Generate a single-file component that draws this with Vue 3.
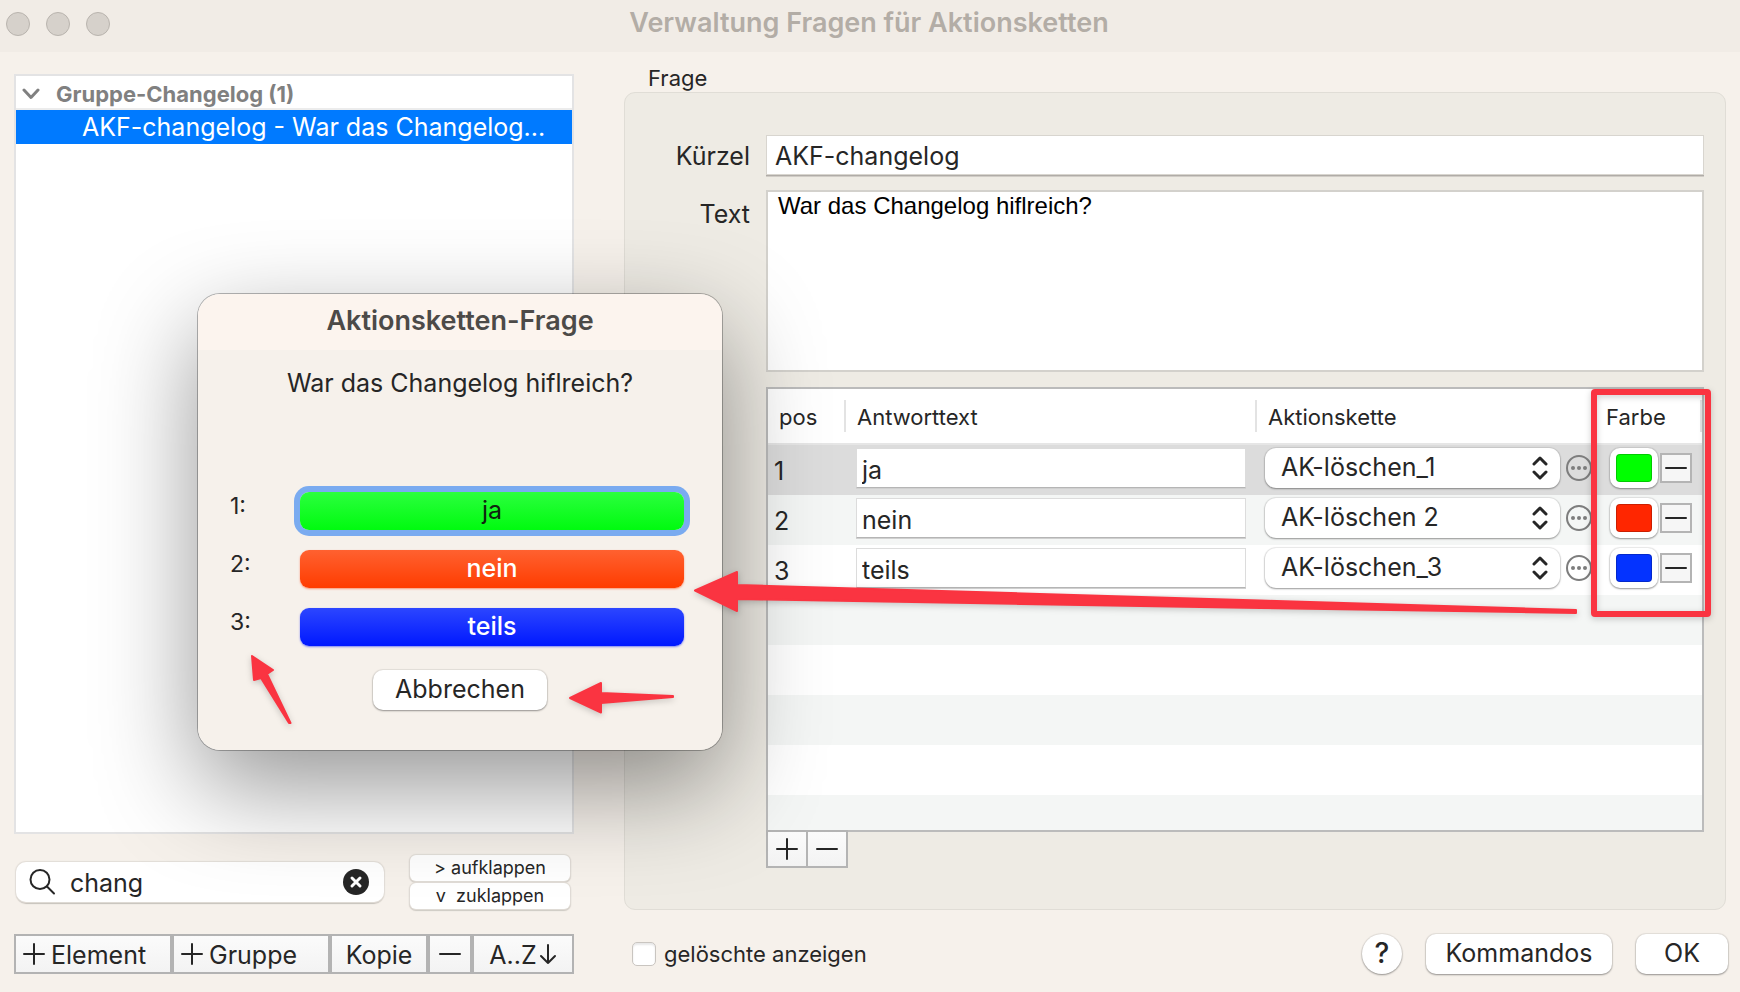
<script setup>
import { ref } from 'vue'

const search = ref('chang')
const code = ref('AKF-changelog')
const text = ref('War das Changelog hiflreich?')
const showDeleted = ref(false)

const chains = ['AK-löschen_1', 'AK-löschen 2', 'AK-löschen_3']
const answers = ref([
  { pos: 1, text: 'ja', chain: 'AK-löschen_1', color: '#00ff00', tone: 'green' },
  { pos: 2, text: 'nein', chain: 'AK-löschen 2', color: '#ff2600', tone: 'red' },
  { pos: 3, text: 'teils', chain: 'AK-löschen_3', color: '#0433ff', tone: 'blue' },
])
</script>

<template>
  <div class="window">
    <header class="titlebar">
      <div class="lights">
        <button class="light" type="button" aria-label="Schließen"></button>
        <button class="light" type="button" aria-label="Minimieren"></button>
        <button class="light" type="button" aria-label="Zoomen"></button>
      </div>
      <h1 class="window-title">Verwaltung Fragen für Aktionsketten</h1>
    </header>

    <main class="content">
      <aside class="sidebar">
        <ul class="tree">
          <li class="tree-group">
            <svg class="chevron" width="18" height="12" viewBox="0 0 18 12" aria-hidden="true">
              <path d="M2 2 L9 9.500 L16 2" />
            </svg>
            Gruppe-Changelog (1)
          </li>
          <li class="tree-item">AKF-changelog - War das Changelog...</li>
        </ul>

        <div class="search-row">
          <div class="search">
            <svg width="28" height="28" viewBox="0 0 28 28" aria-hidden="true">
              <circle cx="12" cy="11.500" r="9.500" />
              <path d="M19 18.500 L26 25.500" />
            </svg>
            <input v-model="search" type="text" aria-label="Suchen" />
            <button class="clear" type="button" aria-label="Suche löschen">
              <svg width="26" height="26" viewBox="0 0 26 26" aria-hidden="true">
                <circle cx="13" cy="13" r="13" />
                <path d="M9 9 L17 17 M17 9 L9 17" />
              </svg>
            </button>
          </div>
          <div class="fold">
            <button type="button">&gt; aufklappen</button>
            <button type="button">v&nbsp; zuklappen</button>
          </div>
        </div>

        <div class="toolbar">
          <button class="tool wide" type="button">
            <svg width="22" height="22" viewBox="0 0 22 22" aria-hidden="true"><path d="M1 11 H21 M11 1 V21" /></svg>
            Element
          </button>
          <button class="tool wide" type="button">
            <svg width="22" height="22" viewBox="0 0 22 22" aria-hidden="true"><path d="M1 11 H21 M11 1 V21" /></svg>
            Gruppe
          </button>
          <button class="tool" type="button">Kopie</button>
          <button class="tool" type="button" aria-label="Entfernen">
            <svg width="22" height="22" viewBox="0 0 22 22" aria-hidden="true"><path d="M1 11 H21" /></svg>
          </button>
          <button class="tool sort" type="button">
            A..Z
            <svg width="18" height="22" viewBox="0 0 18 22" aria-hidden="true"><path d="M9 2 V20 M2 13 L9 20 L16 13" /></svg>
          </button>
        </div>
      </aside>

      <section class="detail" aria-labelledby="frage-title">
        <h2 id="frage-title" class="box-title">Frage</h2>
        <div class="box">
          <label class="field-label" for="code">Kürzel</label>
          <input id="code" v-model="code" class="field" type="text" />
          <label class="field-label top" for="question">Text</label>
          <textarea id="question" v-model="text" class="area"></textarea>

          <div class="answers">
            <div class="grid-frame">
              <table>
                <colgroup>
                  <col class="c-pos" />
                  <col />
                  <col class="c-chain" />
                  <col class="c-color" />
                </colgroup>
                <thead>
                  <tr>
                    <th scope="col">pos</th>
                    <th scope="col">Antworttext</th>
                    <th scope="col">Aktionskette</th>
                    <th scope="col">Farbe</th>
                  </tr>
                </thead>
                <tbody>
                  <tr v-for="(a, i) in answers" :key="a.pos" :class="{ selected: i === 0 }">
                    <td class="pos">{{ a.pos }}</td>
                    <td class="answer">
                      <input v-model="a.text" type="text" :aria-label="'Antworttext ' + a.pos" />
                    </td>
                    <td>
                      <div class="cell">
                        <div class="select">
                          <select v-model="a.chain" :aria-label="'Aktionskette ' + a.pos">
                            <option v-for="c in chains" :key="c">{{ c }}</option>
                          </select>
                          <svg width="16" height="24" viewBox="0 0 16 24" aria-hidden="true">
                            <path d="M2 8 L8 2 L14 8 M2 16 L8 22 L14 16" />
                          </svg>
                        </div>
                        <button class="more" type="button" aria-label="Mehr">
                          <svg width="26" height="26" viewBox="0 0 26 26" aria-hidden="true">
                            <circle class="ring" cx="13" cy="13" r="12" />
                            <circle cx="7" cy="13" r="2" />
                            <circle cx="13" cy="13" r="2" />
                            <circle cx="19" cy="13" r="2" />
                          </svg>
                        </button>
                      </div>
                    </td>
                    <td>
                      <div class="cell color-cell">
                        <input v-model="a.color" class="swatch" type="color" :aria-label="'Farbe ' + a.pos" />
                        <button class="remove" type="button" aria-label="Farbe entfernen">
                          <svg width="22" height="22" viewBox="0 0 22 22" aria-hidden="true"><path d="M1 11 H21" /></svg>
                        </button>
                      </div>
                    </td>
                  </tr>
                </tbody>
              </table>
            </div>
            <div class="row-tools">
              <button type="button" aria-label="Antwort hinzufügen">
                <svg width="22" height="22" viewBox="0 0 22 22" aria-hidden="true"><path d="M1 11 H21 M11 1 V21" /></svg>
              </button>
              <button type="button" aria-label="Antwort entfernen">
                <svg width="22" height="22" viewBox="0 0 22 22" aria-hidden="true"><path d="M1 11 H21" /></svg>
              </button>
            </div>
          </div>
        </div>

        <footer class="footer">
          <label class="check">
            <input v-model="showDeleted" type="checkbox" />
            gelöschte anzeigen
          </label>
          <button class="push help" type="button">?</button>
          <button class="push commands" type="button">Kommandos</button>
          <button class="push ok" type="button">OK</button>
        </footer>
      </section>
    </main>

    <div class="dialog" role="dialog" aria-labelledby="dialog-title">
      <h2 id="dialog-title" class="dialog-title">Aktionsketten-Frage</h2>
      <p class="dialog-text">{{ text }}</p>
      <div class="choices">
        <div v-for="(a, i) in answers" :key="a.pos" class="choice">
          <span class="choice-number">{{ a.pos }}:</span>
          <button type="button" :class="['choice-button', a.tone, { focused: i === 0 }]">{{ a.text }}</button>
        </div>
      </div>
      <button class="push cancel" type="button">Abbrechen</button>
    </div>

    <svg class="marks" aria-hidden="true">
      <rect x="1594" y="392" width="114" height="222" rx="1" />
      <path class="arrow" d="M695 590.500 L737 572 L737 585 L1260 600.500 L1576 610 L1576 613 L1260 608 L737 599 L737 611 Z" />
      <path class="arrow" d="M252 656 L273 670 L267 674 L290.500 723 L289 723 L261 678 L254 680 Z" />
      <path class="arrow" d="M570 698 L601 683 L601 693 L673 696 L673 697 L601 703 L601 712.500 Z" />
    </svg>
  </div>
</template>

<style>
body {
  margin: 0;
  background: #f6f1eb;
}
</style>

<style scoped>
* {
  box-sizing: border-box;
}

.window {
  position: relative;
  display: flex;
  flex-direction: column;
  min-height: 100vh;
  overflow: hidden;
  background: #f6f1eb;
  color: #262626;
  font-family: Inter, "Liberation Sans", sans-serif;
  font-size: 25px;
}

button,
input,
select,
textarea {
  margin: 0;
  padding: 0;
  border: 0;
  outline: 0;
  color: inherit;
  font: inherit;
}

h1,
h2,
p,
ul {
  margin: 0;
  padding: 0;
}

svg {
  flex: none;
  fill: none;
  stroke: #262626;
  stroke-width: 2;
  stroke-linecap: round;
  stroke-linejoin: round;
}

.titlebar {
  display: grid;
  grid-template-columns: 1fr auto 1fr;
  align-items: center;
  height: 52px;
  padding: 0 8px 4px 6px;
  background: #f1ece6;
}

.lights {
  display: flex;
  gap: 16px;
}

.light {
  width: 24px;
  height: 24px;
  border: 1px solid #b9b4ae;
  border-radius: 50%;
  background: #d6d1cb;
}

.window-title {
  padding-bottom: 2px;
  color: #b3ada6;
  font-size: 27px;
  font-weight: 600;
  line-height: 32px;
}

.content {
  flex: 1;
  display: grid;
  grid-template-columns: 560fr 1102fr;
  column-gap: 50px;
  padding: 0 14px 16px;
}

.sidebar {
  display: flex;
  flex-direction: column;
  min-width: 0;
  padding: 22px 0 2px;
}

.tree {
  flex: 1;
  border: 2px solid #e3e3e4;
  background: #fff;
  list-style: none;
}

.tree-group {
  display: flex;
  align-items: center;
  gap: 16px;
  height: 34px;
  padding: 4px 0 0 6px;
  border-bottom: 2px solid #ececec;
  color: #808080;
  font-size: 22px;
  font-weight: 700;
}

.chevron {
  stroke: #808080;
  stroke-width: 3;
}

.tree-item {
  padding-left: 66px;
  background: #007aff;
  color: #fff;
  line-height: 34px;
  white-space: nowrap;
}

.search-row {
  display: flex;
  align-items: center;
  justify-content: space-between;
  gap: 26px;
  margin: 21px 4px 25px 2px;
}

.search {
  flex: 1;
  display: flex;
  align-items: center;
  gap: 14px;
  min-width: 0;
  height: 40px;
  padding: 0 15px 0 12px;
  border-radius: 10px;
  background: #fff;
  box-shadow: 0 0 1px 1px #e2ddd7, 0 2px 1px #c4bfb9;
}

.search input {
  flex: 1;
  min-width: 0;
  padding-top: 2px;
  background: none;
}

.search svg {
  display: block;
}

.clear {
  background: none;
}

.clear circle {
  fill: #262626;
  stroke: none;
}

.clear path {
  stroke: #fff;
  stroke-width: 3;
}

.fold {
  display: flex;
  flex-direction: column;
  gap: 2px;
  width: 160px;
}

.fold button {
  height: 26px;
  border-radius: 6px;
  background: #fff;
  box-shadow: 0 0 1px 1px #e2ddd7, 0 1px 1px 1px #cdc8c2;
  font-size: 18px;
  line-height: 24px;
}

.toolbar {
  display: grid;
  grid-template-columns: 158fr 158fr 98fr 44fr 102fr;
}

.tool {
  display: flex;
  align-items: center;
  justify-content: center;
  gap: 6px;
  min-width: 0;
  height: 40px;
  padding-top: 2px;
  border: 2px solid #b3b3b3;
  background: linear-gradient(#fbfbfb, #f3f3f3);
}

.tool svg {
  margin-bottom: 2px;
}

.wide {
  justify-content: flex-start;
  padding-left: 7px;
}

.sort {
  gap: 2px;
}

.detail {
  display: flex;
  flex-direction: column;
  min-width: 0;
  padding-top: 12px;
}

.box-title {
  padding-left: 24px;
  font-size: 22px;
  font-weight: 400;
  line-height: 28px;
}

.box {
  flex: 1;
  display: grid;
  grid-template-columns: 125px 1fr;
  grid-template-rows: auto auto 1fr;
  gap: 15px 16px;
  padding: 42px 21px 41px 0;
  border: 1px solid #e0ddd6;
  border-radius: 11px;
  background: #eeebe4;
}

.field-label {
  align-self: center;
  padding-top: 2px;
  text-align: right;
}

.field-label.top {
  align-self: start;
  line-height: 44px;
}

.field {
  width: 100%;
  height: 40px;
  padding: 2px 8px 0;
  border: 1px solid #d8d5cf;
  background: #fff;
  box-shadow: 0 1px 0 #b0aca7, 0 2px 0 #d0ccc6;
}

.area {
  display: block;
  width: 100%;
  height: 182px;
  padding: 0 10px;
  border: 2px solid #d3d1cc;
  background: #fff;
  color: #000;
  font-family: "Liberation Sans", Arial, sans-serif;
  font-size: 24px;
  line-height: 28px;
  resize: none;
}

.answers {
  grid-column: 2;
  display: flex;
  flex-direction: column;
}

.grid-frame {
  flex: 1;
  border: 2px solid #bbb;
  background: repeating-linear-gradient(#f4f6f5 0 50px, #fff 50px 100px) 0 6px;
}

table {
  width: 100%;
  border-spacing: 0;
  table-layout: fixed;
}

.c-pos {
  width: 78px;
}

.c-chain {
  width: 338px;
}

.c-color {
  width: 107px;
}

th {
  height: 56px;
  padding: 2px 0 0 11px;
  border-bottom: 2px solid #e6e6e6;
  background: linear-gradient(#e3e3e3, #e3e3e3) no-repeat right center / 2px 32px #fff;
  font-size: 22px;
  font-weight: 400;
  text-align: left;
}

td {
  height: 50px;
  padding: 0 0 4px 8px;
  background: #fff;
}

tr:nth-child(even) td {
  background: #f4f6f5;
}

tr.selected td {
  background: #dcdcdc;
}

td.pos {
  padding: 2px 0 0 6px;
}

td.answer {
  padding: 0 11px 4px 10px;
}

.answer input {
  display: block;
  width: 100%;
  height: 40px;
  padding: 4px 5px 0;
  border: 1px solid #dcdcdc;
  border-bottom-color: #b5b5b5;
  background: #fff;
  box-shadow: 0 1px 0 #d0d0d0;
}

.cell {
  display: flex;
  align-items: center;
  gap: 6px;
}

.color-cell {
  gap: 2px;
  padding-left: 7px;
}

.select {
  position: relative;
  flex: 1;
}

.select select {
  display: block;
  width: 100%;
  height: 40px;
  padding: 0 40px 2px 16px;
  border-radius: 11px;
  appearance: none;
  background: #fff;
  box-shadow: 0 0 1px 1px rgba(0, 0, 0, 0.08), 0 1px 2px rgba(0, 0, 0, 0.35);
}

.select svg {
  position: absolute;
  top: 8px;
  right: 12px;
  stroke-width: 3;
  pointer-events: none;
}

.more {
  margin-right: 3px;
  background: none;
}

.more svg {
  display: block;
  fill: #7d7d7d;
  stroke: none;
}

.more .ring {
  fill: none;
  stroke: #7d7d7d;
}

.swatch {
  width: 48px;
  height: 40px;
  padding: 6px;
  border-radius: 10px;
  appearance: none;
  background: #fff;
  box-shadow: 0 0 1px 1px rgba(0, 0, 0, 0.08), 0 1px 2px rgba(0, 0, 0, 0.35);
}

.swatch::-webkit-color-swatch-wrapper {
  padding: 0;
}

.swatch::-webkit-color-swatch {
  border: 1px solid rgba(0, 0, 0, 0.2);
  border-radius: 4px;
}

.remove {
  display: flex;
  align-items: center;
  justify-content: center;
  width: 32px;
  height: 30px;
  border: 2px solid #b4b4b4;
  background: #f6f6f6;
}

.row-tools {
  display: flex;
  margin-top: -2px;
}

.row-tools button {
  display: flex;
  align-items: center;
  justify-content: center;
  width: 42px;
  height: 38px;
  border: 2px solid #b4b4b4;
  background: linear-gradient(#fbfbfb, #f3f3f3);
}

.row-tools button + button {
  margin-left: -2px;
}

.footer {
  display: flex;
  align-items: center;
  min-height: 40px;
  margin: 24px 0 2px;
}

.check {
  flex: 1;
  display: flex;
  align-items: center;
  gap: 8px;
  padding-left: 8px;
  font-size: 22px;
}

.check input {
  width: 24px;
  height: 24px;
  border: 1px solid #c9c5c0;
  border-radius: 5px;
  appearance: none;
  background: #fff;
  box-shadow: inset 0 2px 2px #e8e8e8;
}

.push {
  height: 40px;
  padding-bottom: 2px;
  border-radius: 10px;
  background: #fff;
  box-shadow: 0 0 1px 1px rgba(0, 0, 0, 0.07), 0 1px 2px rgba(0, 0, 0, 0.35);
}

.help {
  width: 40px;
  border-radius: 50%;
  font-size: 28px;
  font-weight: 500;
}

.commands {
  width: 186px;
  margin: 0 24px;
}

.ok {
  width: 92px;
  margin-right: -2px;
}

.dialog {
  position: absolute;
  top: 294px;
  left: 198px;
  display: flex;
  flex-direction: column;
  align-items: center;
  width: 524px;
  padding-bottom: 40px;
  border-radius: 22px;
  background: linear-gradient(#fcf4ee 56px, #f6f1eb 56px);
  box-shadow: 0 0 0 1px rgba(0, 0, 0, 0.28), 0 36px 100px rgba(0, 0, 0, 0.42);
}

.dialog-title {
  padding-bottom: 2px;
  color: #4c4a48;
  font-size: 27px;
  font-weight: 600;
  line-height: 54px;
}

.dialog-text {
  padding-top: 16px;
  line-height: 34px;
}

.choices {
  display: flex;
  flex-direction: column;
  gap: 20px;
  align-self: stretch;
  padding: 92px 38px 24px 32px;
}

.choice {
  display: flex;
  justify-content: space-between;
}

.choice-number {
  font-size: 23px;
  line-height: 28px;
}

.choice-button {
  width: 384px;
  height: 38px;
  padding-bottom: 2px;
  border-radius: 9px;
  color: #fff;
  font-weight: 500;
}

.green {
  background: linear-gradient(#2bff3e, #00fb0f);
}

.red {
  background: linear-gradient(#ff6130, #ff3c00);
  box-shadow: 0 1px 2px rgba(255, 60, 0, 0.5);
}

.blue {
  background: linear-gradient(#2c46ff, #0018ff);
  box-shadow: 0 1px 2px rgba(0, 24, 255, 0.5);
}

.focused {
  box-shadow: 0 0 0 6px #7aabf0;
  color: #10240f;
  font-weight: 400;
}

.cancel {
  width: 174px;
}

.marks {
  position: absolute;
  inset: 0;
  width: 100%;
  height: 100%;
  overflow: visible;
  filter: drop-shadow(0 2px 3px rgba(0, 0, 0, 0.2));
  pointer-events: none;
}

.marks rect {
  stroke: #fa3441;
  stroke-width: 6;
}

.marks .arrow {
  fill: #fa3441;
  stroke: #fa3441;
}
</style>
